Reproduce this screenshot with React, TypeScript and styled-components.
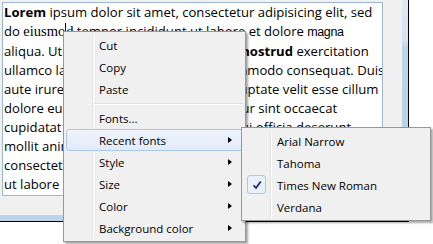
import React from 'react';
import styled, { createGlobalStyle } from 'styled-components';

const GlobalStyle = createGlobalStyle`
  html, body {
    margin: 0;
    padding: 0;
    background: #ffffff;
  }
  body {
    font-family: "Open Sans", "Liberation Sans", sans-serif;
    color: #000;
  }
`;

const Stage = styled.div({
  position: 'relative',
  width: 433,
  height: 244,
  overflow: 'hidden',
  background: '#ffffff',
});

const Window = styled.div({
  width: 408,
  height: 221,
  background: '#f0f0f0',
  borderRight: '1px solid #000',
  borderBottom: '1px solid #000',
  display: 'grid',
  gridTemplateColumns: '402px 6px',
  gridTemplateRows: '215px 6px',
});

const Content = styled.div({
  padding: 2,
});

const SideStrip = styled.div({
  background: 'linear-gradient(to bottom, #dfe9f4 0px, #d6e3f1 40px, #bcd3ec 48px, #b7cfe9 100%)',
});

const BottomStrip = styled.div({
  background: '#bcd3ec',
});

const TextBox = styled.div({
  width: 378,
  height: 192,
  border: '1px solid #9db6d4',
  background: '#ffffff',
  overflow: 'hidden',
  padding: '0 0 0 1px',
  fontSize: 13.1,
  lineHeight: '19px',
});

const Line = styled.div({
  whiteSpace: 'nowrap',
});

const Bold = styled.span({
  fontWeight: 700,
});

const Serif = styled.span({
  fontFamily: '"Liberation Serif", serif',
  fontSize: 14.5,
});

const Narrow = styled.span({
  fontFamily: '"Liberation Sans", sans-serif',
  fontSize: 12.5,
  letterSpacing: -0.4,
});

const Orange = styled.span({
  color: '#e8902c',
});

const Caret = styled.span({
  display: 'inline-block',
  width: 1,
  height: 17,
  background: '#000',
  verticalAlign: -4,
});

const Menu = styled.div<{ $left: number; $top: number; $width: number }>(({ $left, $top, $width }) => ({
  position: 'absolute',
  left: $left,
  top: $top,
  width: $width,
  boxSizing: 'border-box',
  padding: '2px 2px',
  background: '#f0f0f0',
  border: '1px solid #979797',
  boxShadow: '2px 2px 2px rgba(0, 0, 0, 0.35)',
  fontSize: 11.5,
  '&::before': {
    content: '""',
    position: 'absolute',
    left: 28,
    top: 2,
    bottom: 2,
    width: 1,
    background: '#e2e3e3',
    borderRight: '1px solid #ffffff',
  },
}));

const Item = styled.div<{ $active?: boolean }>(({ $active }) => ({
  position: 'relative',
  height: 22,
  boxSizing: 'border-box',
  display: 'flex',
  alignItems: 'center',
  paddingLeft: 32,
  paddingRight: 10,
  borderRadius: 3,
  border: $active ? '1px solid #aac8ee' : '1px solid transparent',
  background: $active ? 'linear-gradient(to bottom, #eef3fb, #e2ebf8)' : 'transparent',
  whiteSpace: 'nowrap',
}));

const Label = styled.span({
  flex: 1,
});

const Arrow = styled.span({
  width: 0,
  height: 0,
  borderTop: '3.5px solid transparent',
  borderBottom: '3.5px solid transparent',
  borderLeft: '4px solid #000',
});

const Separator = styled.div({
  height: 7,
  display: 'flex',
  alignItems: 'center',
  marginLeft: 28,
  '&::after': {
    content: '""',
    flex: 1,
    height: 1,
    background: '#e0e0e0',
    borderBottom: '1px solid #ffffff',
  },
});

const CheckBox = styled.span({
  position: 'absolute',
  left: 2,
  top: 0,
  width: 19,
  height: 19,
  boxSizing: 'border-box',
  border: '1px solid #a9c8ee',
  borderRadius: 3,
  background: '#e8f0fa',
  display: 'flex',
  alignItems: 'center',
  justifyContent: 'center',
});

const lines: React.ReactNode[] = [
  <><Bold>Lorem</Bold> ipsum dolor sit amet, consectetur adipisicing elit, sed</>,
  <>do <Serif>eiusmo</Serif><Caret /><Serif>d</Serif> tempor incididunt ut labore et dolore <Narrow>magna</Narrow></>,
  <>aliqua. Ut enim ad minim veniam, quis <Bold>nostrud</Bold> exercitation</>,
  <>ullamco laboris nisi ut aliquip ex ea commodo consequat. Duis</>,
  <>aute irure dolor in reprehenderit in voluptate velit esse cillum</>,
  <>dolore eu fugiat nulla pariatur. Excepteur sint occaecat</>,
  <>cupidatat non proident, sunt in culpa qui officia deserunt</>,
  <>mollit anim id est laborum. Lorem ipsum dolor sit amet,</>,
  <>consectetur adipisicing elit, sed do eiusmod tempor</>,
  <>ut labore <Orange>et dolore magna aliqua.</Orange></>,
];

const subItems = ['Arial Narrow', 'Tahoma', 'Times New Roman', 'Verdana'];

const App: React.FunctionComponent = () => (
  <Stage>
    <GlobalStyle />
    <Window>
      <Content>
        <TextBox>
          {lines.map((l, i) => <Line key={i}>{l}</Line>)}
        </TextBox>
      </Content>
      <SideStrip />
      <BottomStrip />
    </Window>

    <Menu $left={63} $top={31} $width={183}>
      <Item>Cut</Item>
      <Item>Copy</Item>
      <Item>Paste</Item>
      <Separator />
      <Item>Fonts...</Item>
      <Item $active><Label>Recent fonts</Label><Arrow /></Item>
      <Item><Label>Style</Label><Arrow /></Item>
      <Item><Label>Size</Label><Arrow /></Item>
      <Item><Label>Color</Label><Arrow /></Item>
      <Item><Label>Background color</Label><Arrow /></Item>
    </Menu>

    <Menu $left={241} $top={127} $width={190}>
      {subItems.map(name => (
        <Item key={name}>
          {name === 'Times New Roman' && (
            <CheckBox>
              <svg width="10" height="10" viewBox="0 0 10 10">
                <path d="M1.5 5.2 L4 8 L8.8 1.5" fill="none" stroke="#1c1c78" strokeWidth="1.7" />
              </svg>
            </CheckBox>
          )}
          <Label>{name}</Label>
        </Item>
      ))}
    </Menu>
  </Stage>
);

export default App;
